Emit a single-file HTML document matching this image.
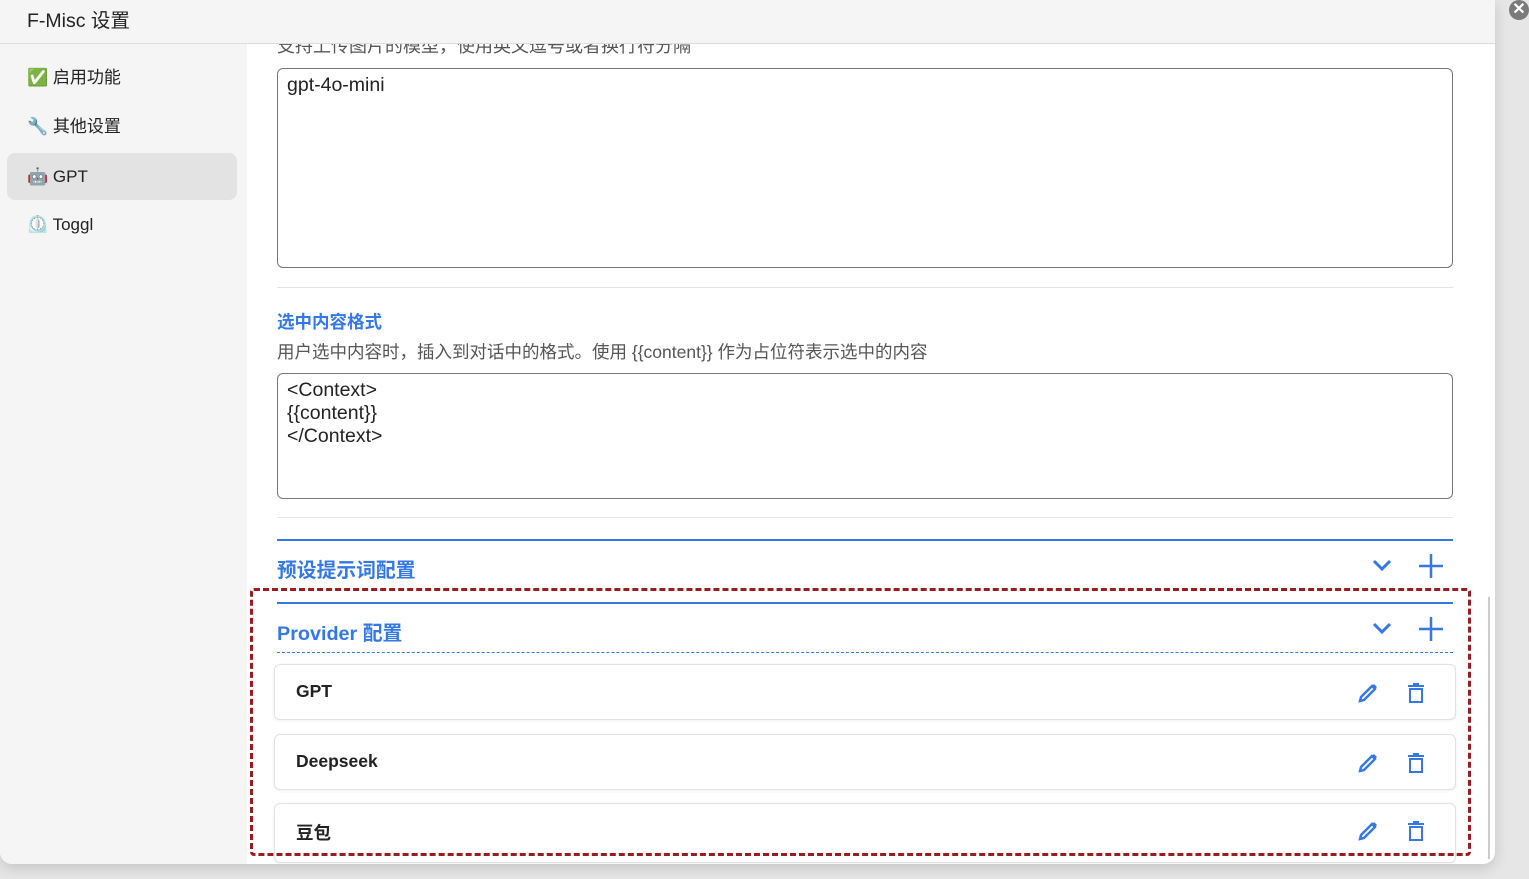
<!DOCTYPE html>
<html><head><meta charset="utf-8"><style>
*{box-sizing:border-box;margin:0;padding:0}
body{width:1529px;height:879px;overflow:hidden;background:#e6e6e6;font-family:"Liberation Sans","Noto Sans CJK SC",sans-serif;position:relative}
.dlg{position:absolute;left:0;top:0;width:1495px;height:864px;background:#fff;border-radius:0 0 12px 12px;overflow:hidden;box-shadow:0 4px 14px rgba(0,0,0,.15)}
.hdr{position:absolute;left:0;top:0;width:1495px;height:44px;background:#f5f5f5;border-bottom:1px solid #ddd}
.hdr span{position:absolute;left:27px;top:4px;font-size:19.5px;color:#222}
.side{position:absolute;left:0;top:44px;width:247px;height:820px;background:#f5f5f5}
.it{position:absolute;left:7px;width:230px;height:47px;border-radius:8px;font-size:17px;color:#222;padding-left:20px;line-height:47px}
.it.a{background:#e3e3e3}
.ab{position:absolute;color:#555}
.ta{position:absolute;left:277px;width:1176px;border:1px solid #777;border-radius:6px;padding:4px 9px;font-size:19.5px;color:#222;line-height:23px}
.hr{position:absolute;left:277px;width:1176px;height:2px;background:#e4e4e4}
.bl{position:absolute;left:277px;width:1176px;height:2px;background:#3478e5}
.tt{position:absolute;left:277px;color:#3478e5;font-weight:bold}
.card{position:absolute;left:274px;width:1182px;height:56px;border:1px solid #e2e2e2;border-radius:6px;box-shadow:0 1px 3px rgba(0,0,0,.06);background:#fff}
.card b{position:absolute;left:21px;top:16px;font-size:17.5px;color:#222}
.card svg{position:absolute;top:17px}
</style></head><body>
<div class="dlg">
<div class="hdr"><span>F-Misc 设置</span></div>
<div class="side">
<div class="it" style="top:10px">✅ 启用功能</div>
<div class="it" style="top:59px">🔧 其他设置</div>
<div class="it a" style="top:109px">🤖 GPT</div>
<div class="it" style="top:157px">⏲️ Toggl</div>
</div>
<div class="ab" style="left:277px;top:32px;font-size:18px;clip-path:inset(12px 0 0 0)">支持上传图片的模型，使用英文逗号或者换行符分隔</div>
<div class="ta" style="top:68px;height:200px;padding-top:5px">gpt-4o-mini</div>
<div class="hr" style="top:287px;height:1px"></div>
<div class="tt" style="top:309px;font-size:17.5px">选中内容格式</div>
<div class="ab" style="left:277px;top:339px;font-size:17.5px">用户选中内容时，插入到对话中的格式。使用 {{content}} 作为占位符表示选中的内容</div>
<div class="ta" style="top:373px;height:126px;padding-top:5px">&lt;Context&gt;<br>{{content}}<br>&lt;/Context&gt;</div>
<div class="hr" style="top:517px;height:1px"></div>
<div class="bl" style="top:539px"></div>
<div class="tt" style="top:554px;font-size:19.8px">预设提示词配置</div>
<div class="bl" style="top:602px"></div>
<div class="tt" style="top:617px;font-size:19.8px">Provider 配置</div>
<div style="position:absolute;left:277px;top:652px;width:1176px;border-top:1px dashed #3478e5"></div>
<svg style="position:absolute;left:1372px;top:558px" width="20" height="14"><path d="M2 3l8 8 8-8" stroke="#3478e5" stroke-width="3" fill="none"/></svg>
<svg style="position:absolute;left:1418px;top:553px" width="26" height="26"><path d="M13 1v24M1 13h24" stroke="#3478e5" stroke-width="2.5"/></svg>
<svg style="position:absolute;left:1372px;top:621px" width="20" height="14"><path d="M2 3l8 8 8-8" stroke="#3478e5" stroke-width="3" fill="none"/></svg>
<svg style="position:absolute;left:1418px;top:616px" width="26" height="26"><path d="M13 1v24M1 13h24" stroke="#3478e5" stroke-width="2.5"/></svg>
<div class="card" style="top:664px"><b>GPT</b>
<svg style="left:1082px" width="22" height="22"><path d="M3 19l1-4L15 4l3 3L7 18z" stroke="#3478e5" stroke-width="2.4" fill="none"/><path d="M15 4l2-2 3 3-2 2z" fill="#3478e5"/></svg>
<svg style="left:1131px" width="20" height="22"><path d="M2 4h16M7 2h6" stroke="#3478e5" stroke-width="2"/><rect x="4" y="7" width="12" height="13" stroke="#3478e5" stroke-width="2" fill="none"/></svg></div>
<div class="card" style="top:734px"><b>Deepseek</b>
<svg style="left:1082px" width="22" height="22"><path d="M3 19l1-4L15 4l3 3L7 18z" stroke="#3478e5" stroke-width="2.4" fill="none"/><path d="M15 4l2-2 3 3-2 2z" fill="#3478e5"/></svg>
<svg style="left:1131px" width="20" height="22"><path d="M2 4h16M7 2h6" stroke="#3478e5" stroke-width="2"/><rect x="4" y="7" width="12" height="13" stroke="#3478e5" stroke-width="2" fill="none"/></svg></div>
<div class="card" style="top:803px;height:60px"><b style="top:16px">豆包</b>
<svg style="left:1082px;top:16px" width="22" height="22"><path d="M3 19l1-4L15 4l3 3L7 18z" stroke="#3478e5" stroke-width="2.4" fill="none"/><path d="M15 4l2-2 3 3-2 2z" fill="#3478e5"/></svg>
<svg style="left:1131px;top:16px" width="20" height="22"><path d="M2 4h16M7 2h6" stroke="#3478e5" stroke-width="2"/><rect x="4" y="7" width="12" height="13" stroke="#3478e5" stroke-width="2" fill="none"/></svg></div>
<div style="position:absolute;left:250px;top:588px;width:1221px;height:268px;border:3px dashed #9b1c1c;border-radius:4px"></div>
<div style="position:absolute;left:1488px;top:597px;width:2px;height:262px;background:#ccc"></div>
</div>
<div style="position:absolute;left:1509px;top:0;width:20px;height:20px;border-radius:50%;background:#7a7a7a;color:#fff;font-size:16px;line-height:19px;text-align:center;font-weight:bold">✕</div>
</body></html>
